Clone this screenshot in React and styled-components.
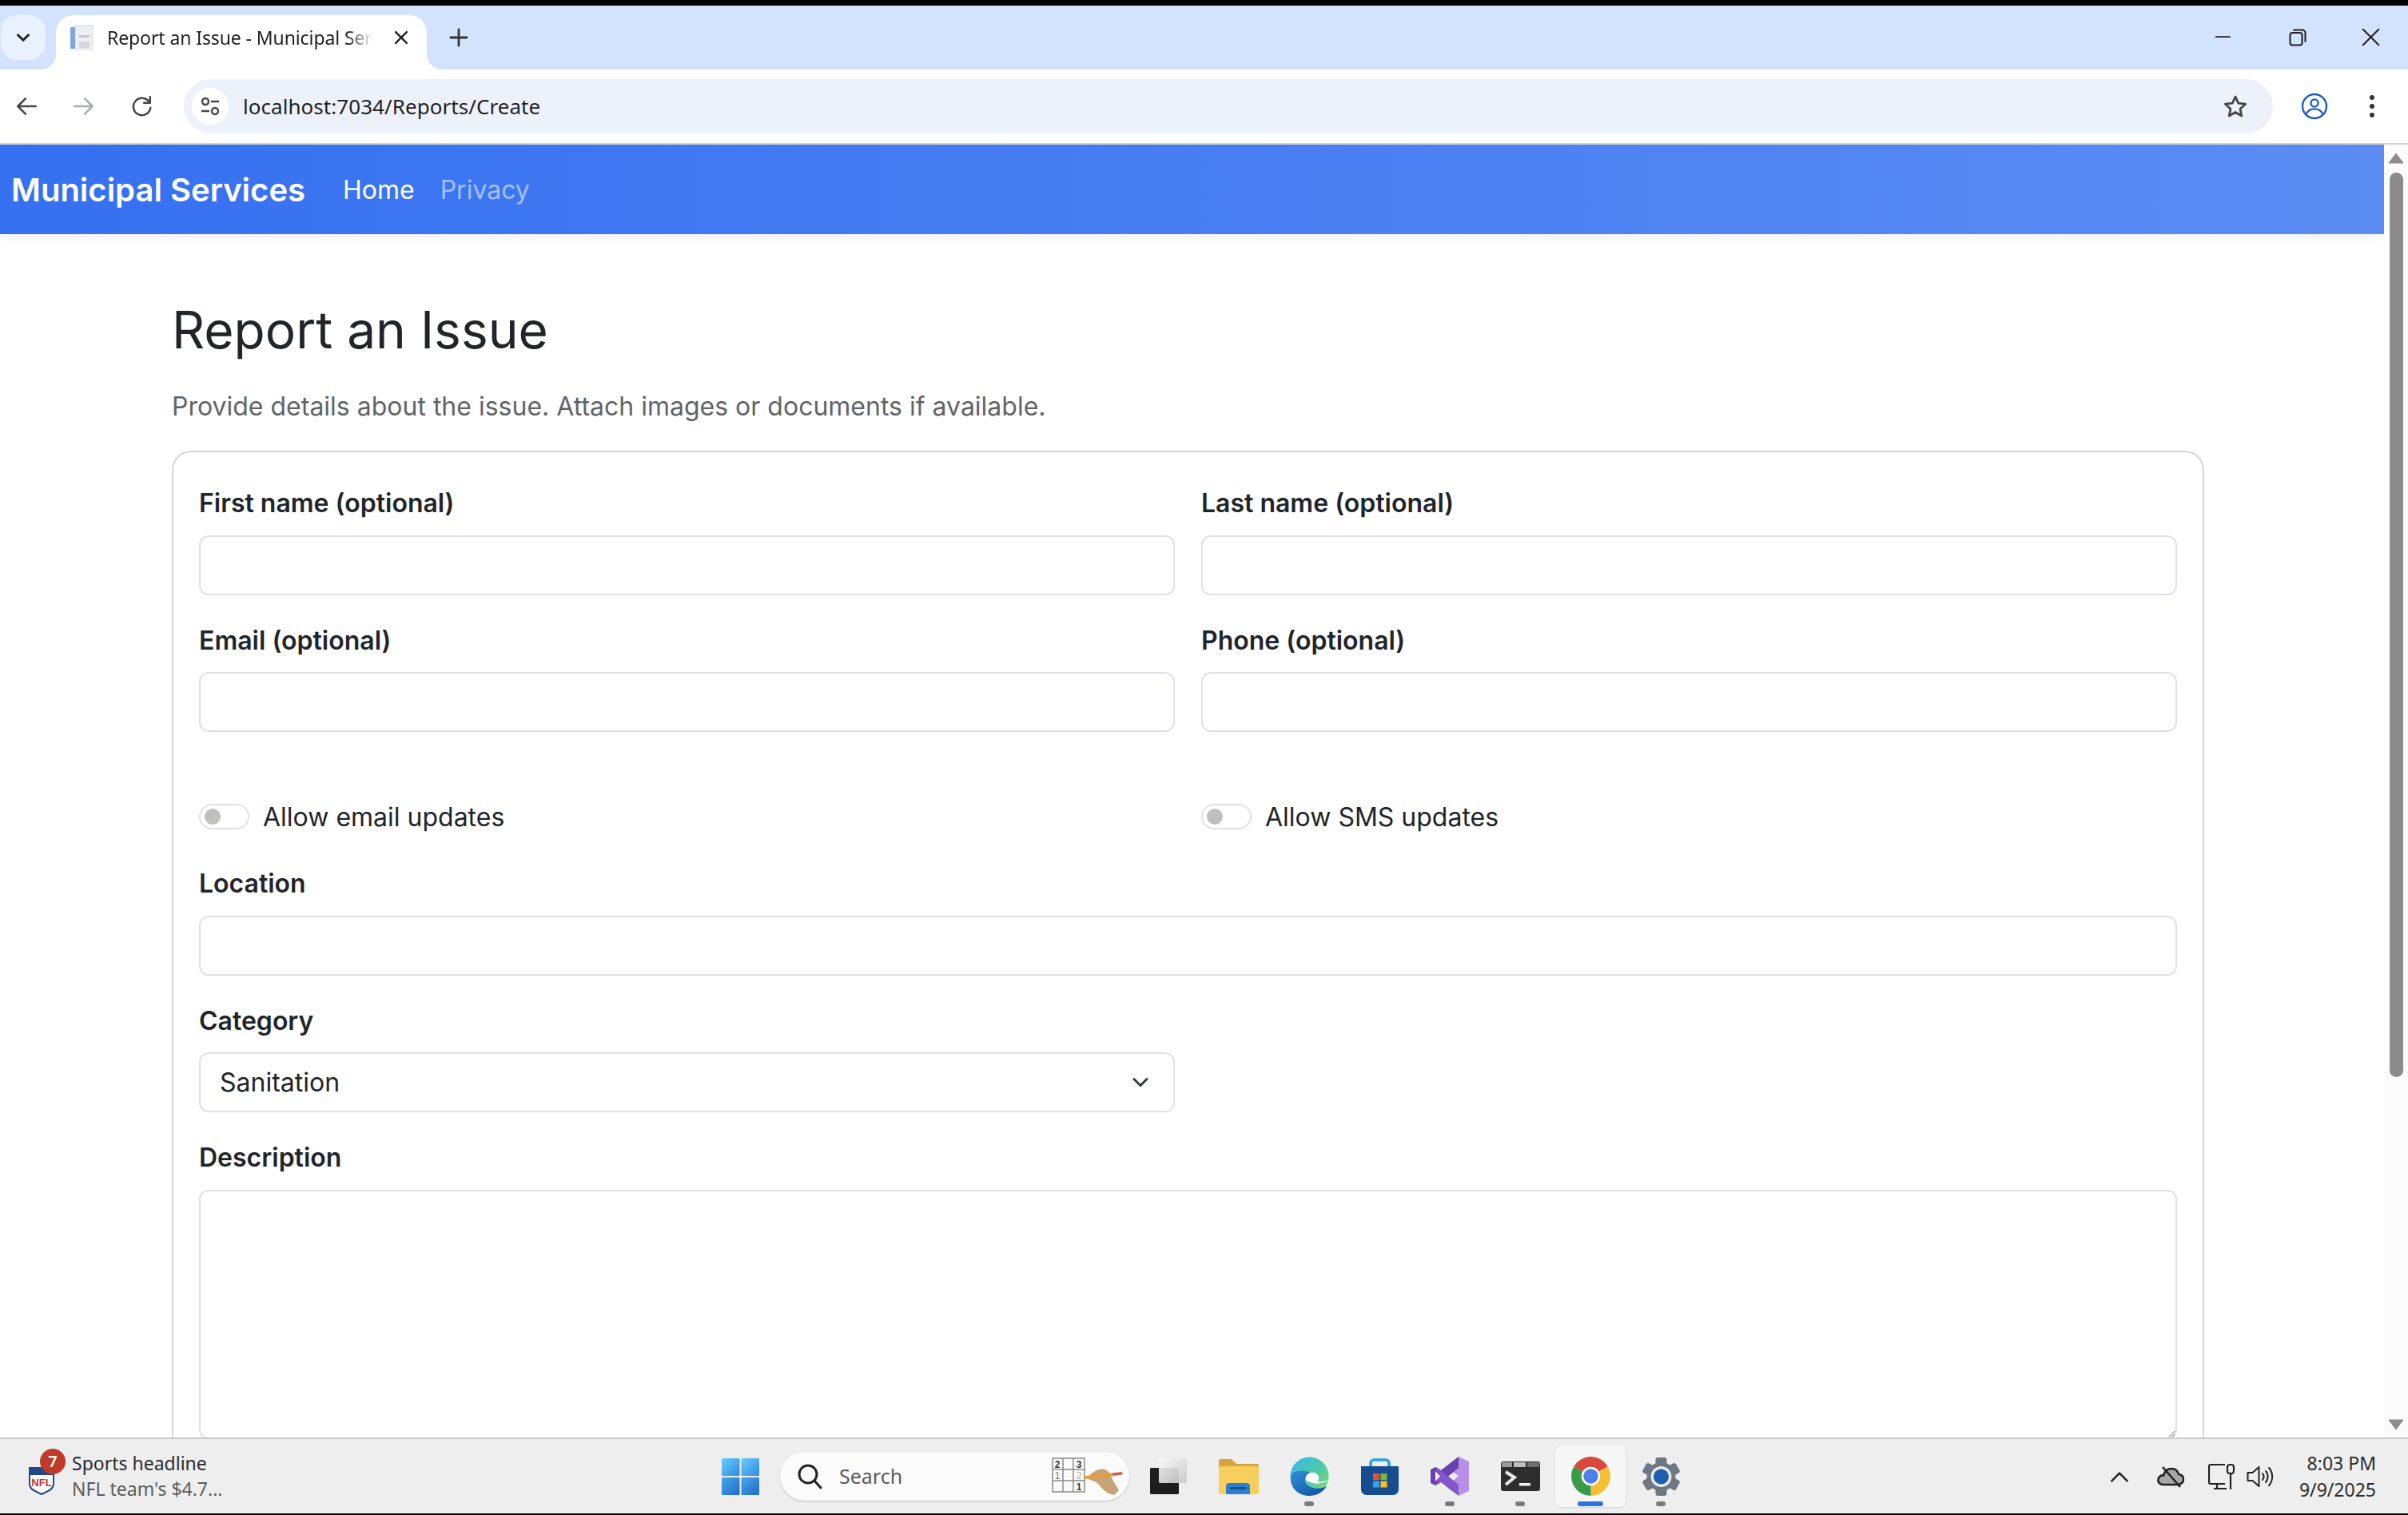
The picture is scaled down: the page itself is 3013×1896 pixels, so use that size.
import React from 'react'
import styled, { createGlobalStyle } from 'styled-components'

const GlobalStyle = createGlobalStyle`
    html, body {
        margin: 0;
        padding: 0;
        background: #fff;
    }
    * {
        box-sizing: border-box;
    }
`

const chevronSvg = encodeURIComponent(
    '<svg xmlns="http://www.w3.org/2000/svg" viewBox="0 0 20 14"><path d="M2 2.5l8 8 8-8" fill="none" stroke="#343a40" stroke-width="3" stroke-linecap="round" stroke-linejoin="round"/></svg>'
)

function Chevron({ size = 20 }) {
    return (
        <svg width={size} height={size} viewBox="0 0 20 20">
            <path d="M4 7l6 6 6-6" fill="none" stroke="#1f1f1f" strokeWidth="2.6" strokeLinecap="round" strokeLinejoin="round" />
        </svg>
    )
}

function Favicon() {
    return (
        <svg width="30" height="32" viewBox="0 0 30 32">
            <rect x="7" y="1" width="22" height="30" fill="#eceff3" stroke="#d5d9de" />
            <rect x="1" y="3" width="6" height="27" fill="#7fa8d8" />
            <rect x="12" y="13" width="13" height="3" fill="#c4c9cf" />
            <rect x="12" y="21" width="13" height="8" fill="#d3d7dc" />
        </svg>
    )
}

function IconPath({ size = 28, d, color = '#474747', width = 2.4 }) {
    return (
        <svg width={size} height={size} viewBox="0 0 28 28">
            <path d={d} fill="none" stroke={color} strokeWidth={width} strokeLinecap="round" strokeLinejoin="round" />
        </svg>
    )
}

function SiteInfoIcon() {
    return (
        <svg width="26" height="26" viewBox="0 0 26 26" fill="none" stroke="#474747" strokeWidth="2.4">
            <circle cx="7" cy="7" r="4" />
            <path d="M14 7h10M2 19h10" />
            <circle cx="19" cy="19" r="4" />
        </svg>
    )
}

function StarIcon() {
    return (
        <svg width="32" height="32" viewBox="0 0 32 32">
            <path d="M16 4l3.7 8.2 8.9 1-6.6 6 1.8 8.8L16 23.5 8.2 28l1.8-8.8-6.6-6 8.9-1z" fill="none" stroke="#474747" strokeWidth="2.8" strokeLinejoin="round" />
        </svg>
    )
}

function ProfileIcon() {
    return (
        <svg width="34" height="34" viewBox="0 0 34 34" fill="none" stroke="#1f5bc8" strokeWidth="2.4">
            <circle cx="17" cy="17" r="15" />
            <circle cx="17" cy="13" r="4.6" />
            <path d="M6.5 27c2-4.6 5.6-6.6 10.5-6.6s8.500 2 10.500 6.600" />
        </svg>
    )
}

function RestoreIcon() {
    return (
        <svg width="22" height="22" viewBox="0 0 22 22" fill="none" stroke="#1f1f1f" strokeWidth="2">
            <rect x="1.500" y="5" width="15" height="15.500" rx="3" />
            <path d="M6 1.500h10.500a4 4 0 0 1 4 4V16" strokeLinecap="round" />
        </svg>
    )
}

function ScrollArrow({ down }) {
    return (
        <svg width="20" height="14" viewBox="0 0 20 14">
            <path d={down ? 'M1 1h18l-9 12z' : 'M10 1l9 12H1z'} fill="#8c8c8c" stroke="#8c8c8c" strokeLinejoin="round" />
        </svg>
    )
}

function NflLogo() {
    return (
        <svg width="32" height="38" viewBox="0 0 32 38">
            <path d="M1 4h30v20c0 6-4 8-15 13C5 32 1 30 1 24z" fill="#fff" stroke="#1f4a8a" strokeWidth="2" />
            <rect x="2" y="5" width="28" height="8" fill="#1f4a8a" />
            <text x="16" y="27" textAnchor="middle" fontFamily="Liberation Sans, sans-serif" fontWeight="700" fontSize="13" fill="#c8332b">NFL</text>
        </svg>
    )
}

function WindowsLogo() {
    return (
        <svg width="47" height="46" viewBox="0 0 47 46">
            <defs>
                <linearGradient id="winA" x1="0" y1="0" x2="1" y2="1">
                    <stop offset="0" stopColor="#6bcdfa" />
                    <stop offset="1" stopColor="#2f8adf" />
                </linearGradient>
                <linearGradient id="winB" x1="0" y1="0" x2="1" y2="1">
                    <stop offset="0" stopColor="#4aa6ea" />
                    <stop offset="1" stopColor="#1f6cc9" />
                </linearGradient>
            </defs>
            <rect width="22.500" height="22" rx="1.500" fill="url(#winA)" />
            <rect x="24.500" width="22.500" height="22" fill="url(#winA)" rx="1.500" />
            <rect y="24" width="22.500" height="22" fill="url(#winB)" rx="1.500" />
            <rect x="24.500" y="24" width="22.500" height="22" fill="url(#winB)" rx="1.500" />
        </svg>
    )
}

function SearchIcon() {
    return (
        <svg width="32" height="34" viewBox="0 0 32 34" fill="none" stroke="#222" strokeWidth="3">
            <circle cx="14" cy="14" r="11" />
            <path d="M22 22l8 9" strokeLinecap="round" />
        </svg>
    )
}

function SudokuHand() {
    return (
        <svg width="90" height="50" viewBox="0 0 90 50">
            <g fill="none" stroke="#8a8a8a" strokeWidth="1.500">
                <rect x="1" y="2" width="40" height="42" />
                <path d="M14 2v42M27 2v42M1 16h40M1 30h40" />
            </g>
            <g fontFamily="Liberation Sans, sans-serif" fontSize="12" textAnchor="middle">
                <text x="7" y="14" fill="#333" fontWeight="700">2</text>
                <text x="34" y="14" fill="#333" fontWeight="700">3</text>
                <text x="7" y="28" fill="#777">1</text>
                <text x="34" y="28" fill="#aaa">2</text>
                <text x="34" y="42" fill="#333" fontWeight="700">1</text>
            </g>
            <path d="M44 27C50 20 58 14 66 16c8 2 8 10 12 16l6 10-6 6c-8-1-16-8-20-14-4-4-10-4-14-7z" fill="#c9a277" />
            <path d="M42 26l36-4" stroke="#e6a02e" strokeWidth="3.500" strokeLinecap="round" />
            <path d="M78 22l9-1" stroke="#c95c4a" strokeWidth="3.500" strokeLinecap="round" />
        </svg>
    )
}

function CopilotIcon() {
    return (
        <svg width="48" height="46" viewBox="0 0 48 46">
            <defs>
                <linearGradient id="copA" x1="0" y1="0" x2="1" y2="1">
                    <stop offset="0" stopColor="#fafafa" />
                    <stop offset="1" stopColor="#c8c8c8" />
                </linearGradient>
            </defs>
            <rect x="1" y="12" width="36" height="33" rx="1.500" fill="#1e1e1e" />
            <rect x="12" y="0" width="35" height="31" rx="1.500" fill="url(#copA)" opacity=".92" />
        </svg>
    )
}

function FolderIcon() {
    return (
        <svg width="52" height="44" viewBox="0 0 52 44">
            <path d="M1 3a3 3 0 0 1 3-3h13l6 6h26a2 2 0 0 1 2 2v6H1z" fill="#d9a33a" />
            <rect x="1" y="9" width="50" height="35" rx="2" fill="#f8cf5e" />
            <path d="M10 44V34a4 4 0 0 1 4-4h22a4 4 0 0 1 4 4v10z" fill="#2f7fd1" />
            <rect x="15" y="35" width="20" height="3" fill="#17548f" />
        </svg>
    )
}

function EdgeIcon() {
    return (
        <svg width="49" height="49" viewBox="0 0 49 49">
            <defs>
                <linearGradient id="edgeA" x1="0" y1="0" x2="1" y2="1">
                    <stop offset="0" stopColor="#37b7e8" />
                    <stop offset=".55" stopColor="#4fc9a8" />
                    <stop offset="1" stopColor="#88de6b" />
                </linearGradient>
                <linearGradient id="edgeB" x1="0" y1="0" x2="1" y2="1">
                    <stop offset="0" stopColor="#2f8fdc" />
                    <stop offset="1" stopColor="#0f4f9e" />
                </linearGradient>
            </defs>
            <circle cx="24.500" cy="24.500" r="24" fill="url(#edgeA)" />
            <path d="M1 26C0 40 12 49 24 49c9 0 17-4 22-12-6 3-14 4-20 1-6-2-9-8-6-13 2-3 5-4 8-4-7-4-26-6-27 5z" fill="url(#edgeB)" />
            <path d="M20 25c2-5 9-7 14-3 3 3 3 7 0 9 5 1 10 0 14-2-3 3-12 6-19 4-6-1-11-3-9-8z" fill="#fff" />
        </svg>
    )
}

function StoreIcon() {
    return (
        <svg width="47" height="47" viewBox="0 0 47 47">
            <path d="M12 13V7a4 4 0 0 1 4-4h15a4 4 0 0 1 4 4v6" fill="none" stroke="#29a3dc" strokeWidth="3.500" />
            <path d="M0 11h47v29a7 7 0 0 1-7 7H7a7 7 0 0 1-7-7z" fill="#164d8f" />
            <rect x="15" y="20" width="8" height="8" fill="#e8512f" />
            <rect x="24.500" y="20" width="8" height="8" fill="#7dbb2e" />
            <rect x="15" y="29.500" width="8" height="8" fill="#2aa6ee" />
            <rect x="24.500" y="29.500" width="8" height="8" fill="#fbbb20" />
        </svg>
    )
}

function VisualStudioIcon() {
    return (
        <svg width="49" height="49" viewBox="0 0 49 49">
            <path d="M35 0l13 6v37l-13 6-12-15 12-9.500-12-9.500z" fill="#b78fe8" />
            <path d="M35 0v14L13 32l-7 4-6-3V16l6-3 7 4z" fill="#6a3fb0" />
            <path d="M35 49V35L13 17l-7-4 6 11.500-6 11.500 7-4 10 8z" fill="#8457c8" />
            <path d="M6 18l6 6.500L6 31z" fill="#f2f2f2" />
        </svg>
    )
}

function TerminalIcon() {
    return (
        <svg width="49" height="37" viewBox="0 0 49 37">
            <rect width="49" height="37" rx="3" fill="#2d2d2d" />
            <rect x="1" y="1" width="13" height="6" fill="#9a9a9a" />
            <rect x="16" y="1" width="15" height="6" fill="#bdbdbd" />
            <rect x="33" y="1" width="15" height="6" fill="#6e6e6e" />
            <path d="M6 13l11 7-11 9" fill="none" stroke="#e8e8e8" strokeWidth="4" />
            <rect x="23" y="27" width="14" height="3.500" fill="#f2f2f2" />
        </svg>
    )
}

function ChromeIcon() {
    return (
        <svg width="49" height="49" viewBox="0 0 48 48">
            <path d="M24 24L3.200 12A24 24 0 0 1 44.800 12z" fill="#d9483b" />
            <path d="M24 24l20.800-12A24 24 0 0 1 24 48z" fill="#f4c033" />
            <path d="M24 24v24A24 24 0 0 1 3.200 12z" fill="#3a9a4c" />
            <circle cx="24" cy="24" r="11.500" fill="#fff" />
            <circle cx="24" cy="24" r="9" fill="#4a80e8" />
        </svg>
    )
}

function GearIcon() {
    return (
        <svg width="49" height="48" viewBox="0 0 48 48">
            <g fill="#6f7780">
                {[0, 60, 120, 180, 240, 300].map((deg) => (
                    <rect key={deg} x="17" y="0" width="14" height="12" rx="3" transform={`rotate(${deg} 24 24)`} />
                ))}
                <circle cx="24" cy="24" r="18" />
            </g>
            <circle cx="24" cy="24" r="13" fill="#e6e8ea" />
            <circle cx="24" cy="24" r="9.500" fill="#1f5db0" />
        </svg>
    )
}

function TrayCloud() {
    return (
        <svg width="34" height="28" viewBox="0 0 34 28" fill="none" stroke="#222" strokeWidth="2.600">
            <path d="M8 24C3 24 1 20.500 1.500 17.500 2 14 5 12 8 12.500 9.500 7 13 4 18 4c5 0 8 3 9 7 3.500.5 6 3 6 6.500S30 24 26 24z" fill="#a8a8a8" />
            <path d="M7 2l22 25" />
        </svg>
    )
}

function TrayNetwork() {
    return (
        <svg width="34" height="34" viewBox="0 0 34 34" fill="none" stroke="#222" strokeWidth="2.200">
            <path d="M21 2H3a2 2 0 0 0-2 2v20a2 2 0 0 0 2 2h18" />
            <path d="M11 26v5M7 32h16" />
            <rect x="24" y="2" width="8" height="11" rx="3" />
            <path d="M28 13v20" />
        </svg>
    )
}

function TraySpeaker() {
    return (
        <svg width="34" height="30" viewBox="0 0 34 30" fill="none" stroke="#222" strokeWidth="2">
            <path d="M1.500 10v10h6l8 7V3l-8 7z" strokeLinejoin="round" />
            <path d="M20 11c2 2.500 2 5.500 0 8M24 8c3.500 4 3.500 10 0 14M28 4c5.500 6 5.500 16 0 22" strokeLinecap="round" />
        </svg>
    )
}

const taskIcons = [
    { id: 'copilot', icon: <CopilotIcon /> },
    { id: 'folder', icon: <FolderIcon /> },
    { id: 'edge', icon: <EdgeIcon />, running: true },
    { id: 'store', icon: <StoreIcon /> },
    { id: 'vs', icon: <VisualStudioIcon />, running: true },
    { id: 'terminal', icon: <TerminalIcon />, running: true },
    { id: 'chrome', icon: <ChromeIcon />, active: true },
    { id: 'settings', icon: <GearIcon />, running: true },
]

export default function App() {
    return (
        <Screen>
            <GlobalStyle />
            <TopEdge />
            <TabStrip>
                <TabSearch><Chevron size={22} /></TabSearch>
                <Tab>
                    <Favicon />
                    <TabTitle>Report an Issue - Municipal Services</TabTitle>
                    <TabClose>
                        <IconPath size={24} d="M6 6l16 16M22 6L6 22" color="#1f1f1f" width={2.8} />
                    </TabClose>
                </Tab>
                <NewTab>
                    <IconPath size={28} d="M14 4v20M4 14h20" color="#333" width={2.800} />
                </NewTab>
                <WindowControls>
                    <WindowButton><IconPath size={24} d="M2 13h20" color="#1f1f1f" width={2.200} /></WindowButton>
                    <WindowButton><RestoreIcon /></WindowButton>
                    <WindowButton><IconPath size={26} d="M3 3l21 21M24 3L3 24" color="#1f1f1f" width={2.200} /></WindowButton>
                </WindowControls>
            </TabStrip>
            <Toolbar>
                <ToolButton><IconPath size={30} d="M25 14H5M13 5l-9 9 9 9" /></ToolButton>
                <ToolButton><IconPath size={30} d="M3 14h20M15 5l9 9-9 9" color="#a9acb0" /></ToolButton>
                <ToolButton><IconPath size={30} d="M23 9a10 10 0 1 0 1.500 7M24 3v7h-7" /></ToolButton>
                <Omnibox>
                    <SiteInfo><SiteInfoIcon /></SiteInfo>
                    <UrlText>localhost:7034/Reports/Create</UrlText>
                    <ToolButton><StarIcon /></ToolButton>
                </Omnibox>
                <ToolButton><ProfileIcon /></ToolButton>
                <ToolButton>
                    <Dots><i /><i /><i /></Dots>
                </ToolButton>
            </Toolbar>
            <Viewport>
                <Page>
                    <NavBar>
                        <Brand>Municipal Services</Brand>
                        <NavLink $active>Home</NavLink>
                        <NavLink>Privacy</NavLink>
                    </NavBar>
                    <Content>
                        <Title>Report an Issue</Title>
                        <Lead>Provide details about the issue. Attach images or documents if available.</Lead>
                        <Card>
                            <FormGrid>
                                <Field>
                                    <Label>First name (optional)</Label>
                                    <TextInput readOnly />
                                </Field>
                                <Field>
                                    <Label>Last name (optional)</Label>
                                    <TextInput readOnly />
                                </Field>
                                <Field>
                                    <Label>Email (optional)</Label>
                                    <TextInput readOnly />
                                </Field>
                                <Field>
                                    <Label>Phone (optional)</Label>
                                    <TextInput readOnly />
                                </Field>
                                <SwitchRow>
                                    <Switch />
                                    <SwitchLabel>Allow email updates</SwitchLabel>
                                </SwitchRow>
                                <SwitchRow>
                                    <Switch />
                                    <SwitchLabel>Allow SMS updates</SwitchLabel>
                                </SwitchRow>
                                <Field $wide>
                                    <Label>Location</Label>
                                    <TextInput readOnly />
                                </Field>
                                <Field>
                                    <Label>Category</Label>
                                    <SelectBox defaultValue="Sanitation">
                                        <option>Sanitation</option>
                                    </SelectBox>
                                </Field>
                                <Field $wide>
                                    <Label>Description</Label>
                                    <TextArea readOnly />
                                </Field>
                            </FormGrid>
                        </Card>
                    </Content>
                </Page>
                <ScrollBar>
                    <ScrollArrow />
                    <ScrollThumb />
                    <ScrollBottom><ScrollArrow down /></ScrollBottom>
                </ScrollBar>
            </Viewport>
            <TaskBar>
                <NewsWidget>
                    <NewsLogo>
                        <NflLogo />
                        <NewsBadge>7</NewsBadge>
                    </NewsLogo>
                    <NewsText>
                        <NewsTitle>Sports headline</NewsTitle>
                        <NewsSub>NFL team's $4.7...</NewsSub>
                    </NewsText>
                </NewsWidget>
                <WindowsLogo />
                <SearchPill>
                    <SearchIcon />
                    <SearchText>Search</SearchText>
                    <SudokuHand />
                </SearchPill>
                <TaskIcons>
                    {taskIcons.map((item) => (
                        <TaskSlot key={item.id} $active={item.active}>
                            {item.icon}
                            {item.active && <ActiveBar />}
                            {item.running && <RunningDot />}
                        </TaskSlot>
                    ))}
                </TaskIcons>
                <Tray>
                    <TrayItem $gap={32}>
                        <IconPath size={30} d="M5 19l9-9 9 9" color="#222" width={2.400} />
                    </TrayItem>
                    <TrayItem $gap={30}><TrayCloud /></TrayItem>
                    <TrayItem $gap={14}><TrayNetwork /></TrayItem>
                    <TrayItem $gap={32}><TraySpeaker /></TrayItem>
                    <Clock>
                        <span>8:03 PM</span>
                        <span>9/9/2025</span>
                    </Clock>
                </Tray>
            </TaskBar>
            <BottomEdge />
        </Screen>
    )
}

const Screen = styled.div`
    width: 3013px;
    height: 1896px;
    display: flex;
    flex-direction: column;
    overflow: hidden;
    font-family: Inter, "Liberation Sans", sans-serif;
    background: #fff;
    color: #212529;
`

const TopEdge = styled.div`
    height: 7px;
    background: #000;
    flex: none;
`

const TabStrip = styled.div`
    height: 80px;
    flex: none;
    background: #d3e3fd;
    display: flex;
    align-items: flex-start;
    padding-top: 12px;
`

const TabSearch = styled.div`
    width: 56px;
    height: 56px;
    margin-left: 1px;
    border-radius: 20px;
    background: #eaf1fe;
    display: flex;
    align-items: center;
    justify-content: center;
`

const Tab = styled.div`
    position: relative;
    width: 464px;
    height: 68px;
    margin-left: 13px;
    padding: 0 20px 12px 17px;
    background: #fff;
    border-radius: 22px 22px 0 0;
    display: flex;
    align-items: center;
    &::before, &::after {
        content: '';
        position: absolute;
        bottom: 0;
        width: 20px;
        height: 20px;
    }
    &::before {
        left: -20px;
        background: radial-gradient(circle at 0 0, #d3e3fd 20px, #fff 20.500px);
    }
    &::after {
        right: -20px;
        background: radial-gradient(circle at 100% 0, #d3e3fd 20px, #fff 20.500px);
    }
`

const TabTitle = styled.div`
    width: 333px;
    margin-left: 17px;
    font-family: "Noto Sans", sans-serif;
    font-size: 23px;
    letter-spacing: -.1px;
    color: #1f1f1f;
    white-space: nowrap;
    overflow: hidden;
    -webkit-mask-image: linear-gradient(to right, #000 90%, transparent);
    mask-image: linear-gradient(to right, #000 90%, transparent);
`

const TabClose = styled.div`
    margin-left: auto;
    display: flex;
`

const NewTab = styled.div`
    margin-left: 26px;
    height: 56px;
    display: flex;
    align-items: center;
`

const WindowControls = styled.div`
    margin-left: auto;
    margin-top: -12px;
    display: flex;
`

const WindowButton = styled.div`
    width: 92px;
    height: 80px;
    display: flex;
    align-items: center;
    justify-content: center;
`

const Toolbar = styled.div`
    height: 94px;
    flex: none;
    background: #fff;
    border-bottom: 2px solid #d4d4d4;
    display: flex;
    align-items: center;
    gap: 28px;
    padding: 0 23px 1px 11px;
`

const ToolButton = styled.div`
    width: 44px;
    height: 44px;
    flex: none;
    display: flex;
    align-items: center;
    justify-content: center;
`

const Omnibox = styled.div`
    flex: 1;
    height: 68px;
    margin: 0 2px 0 3px;
    padding: 0 25px 0 10px;
    border-radius: 34px;
    background: #edf2fa;
    display: flex;
    align-items: center;
`

const SiteInfo = styled.div`
    width: 46px;
    height: 46px;
    border-radius: 50%;
    background: #fff;
    display: flex;
    align-items: center;
    justify-content: center;
`

const UrlText = styled.div`
    flex: 1;
    margin-left: 18px;
    font-family: "Noto Sans", sans-serif;
    font-size: 26px;
    letter-spacing: .05px;
    color: #1f1f1f;
`

const Dots = styled.div`
    display: flex;
    flex-direction: column;
    gap: 5px;
    i {
        width: 6px;
        height: 6px;
        border-radius: 50%;
        background: #333;
    }
`

const Viewport = styled.div`
    flex: 1;
    min-height: 0;
    display: flex;
    background: #fff;
`

const Page = styled.div`
    flex: 1;
    min-width: 0;
    overflow: hidden;
`

const NavBar = styled.nav`
    height: 112px;
    padding: 0 0 0 14px;
    display: flex;
    align-items: center;
    background: linear-gradient(90deg, #3570f0, #5a8cf3);
    box-shadow: 0 3px 14px rgba(0, 0, 0, .08);
`

const Brand = styled.div`
    width: 415px;
    font-size: 40px;
    font-weight: 600;
    color: #fff;
    white-space: nowrap;
`

const NavLink = styled.div`
    margin-right: 32px;
    font-size: 32px;
    color: ${(props) => (props.$active ? '#fff' : 'rgba(255, 255, 255, .55)')};
`

const Content = styled.main`
    padding: 82px 225px 0 215px;
`

const Title = styled.h1`
    margin: 0;
    font-size: 64px;
    font-weight: 400;
    line-height: 76px;
    color: #212529;
`

const Lead = styled.p`
    margin: 35px 0 0;
    font-size: 32px;
    line-height: 46px;
    color: #5f6468;
`

const Card = styled.section`
    margin-top: 32px;
    height: 1400px;
    padding: 41px 32px 0;
    border: 2px solid #d4d6d9;
    border-radius: 24px;
`

const FormGrid = styled.div`
    display: grid;
    grid-template-columns: 1fr 1fr;
    column-gap: 33px;
`

const Field = styled.div`
    grid-column: ${(props) => (props.$wide ? '1 / -1' : 'auto')};
    margin-bottom: 34px;
`

const Label = styled.label`
    display: block;
    height: 46px;
    margin-bottom: 16.500px;
    font-size: 32px;
    font-weight: 600;
    line-height: 46px;
    color: #212529;
`

const TextInput = styled.input`
    display: block;
    width: 100%;
    height: 75px;
    border: 2px solid #dee2e6;
    border-radius: 12px;
    background: #fff;
    outline: none;
`

const SelectBox = styled.select`
    display: block;
    width: 100%;
    height: 75px;
    padding: 0 24px;
    border: 2px solid #dee2e6;
    border-radius: 12px;
    font-family: inherit;
    font-size: 32px;
    color: #212529;
    appearance: none;
    background: #fff url("data:image/svg+xml,${chevronSvg}") no-repeat right 31px center / 20px 14px;
`

const TextArea = styled.textarea`
    display: block;
    width: 100%;
    height: 312px;
    border: 2px solid #dee2e6;
    border-radius: 12px;
    background: #fff;
    outline: none;
`

const SwitchRow = styled.div`
    height: 46px;
    margin: 49px 0 38px;
    display: flex;
    align-items: center;
    gap: 17px;
`

const Switch = styled.div`
    width: 63px;
    height: 32px;
    padding: 4px 5px;
    border: 2px solid #dee2e6;
    border-radius: 16px;
    background: #fff;
    &::before {
        content: '';
        display: block;
        width: 20px;
        height: 20px;
        border-radius: 50%;
        background: #bfbfbf;
    }
`

const SwitchLabel = styled.span`
    font-size: 32px;
    color: #212529;
`

const ScrollBar = styled.div`
    width: 30px;
    flex: none;
    padding: 10px 0 9px;
    display: flex;
    flex-direction: column;
    align-items: center;
    background: #fbfbfb;
`

const ScrollThumb = styled.div`
    width: 17px;
    height: 1132px;
    margin-top: 11px;
    border-radius: 9px;
    background: #8c8c8c;
`

const ScrollBottom = styled.div`
    margin-top: auto;
    display: flex;
`

const TaskBar = styled.footer`
    height: 95px;
    flex: none;
    background: #eeeeee;
    border-top: 2px solid #c9c9c9;
    display: flex;
    align-items: center;
    font-family: "Noto Sans", sans-serif;
`

const NewsWidget = styled.div`
    width: 903px;
    flex: none;
    padding-left: 36px;
    display: flex;
    align-items: center;
    gap: 22px;
`

const NewsLogo = styled.div`
    position: relative;
    width: 32px;
    height: 38px;
    margin-top: 8px;
`

const NewsBadge = styled.div`
    position: absolute;
    top: -20px;
    left: 14px;
    width: 32px;
    height: 32px;
    border-radius: 50%;
    background: #bf3a28;
    color: #fff;
    font-size: 20px;
    font-weight: 600;
    text-align: center;
    line-height: 32px;
`

const NewsText = styled.div`
    display: flex;
    flex-direction: column;
    margin-top: -2px;
    gap: 2px;
    font-size: 23px;
    line-height: 30px;
`

const NewsTitle = styled.div`
    color: #2a2a2a;
`

const NewsSub = styled.div`
    color: #5c5c5c;
`

const SearchPill = styled.div`
    width: 437px;
    height: 61px;
    margin-left: 26px;
    padding: 0 7px 0 21px;
    border-radius: 31px;
    background: #fbfbfb;
    box-shadow: 0 1px 2px rgba(0, 0, 0, .2);
    display: flex;
    align-items: center;
`

const SearchText = styled.span`
    flex: 1;
    margin-left: 21px;
    margin-bottom: 2px;
    font-size: 25px;
    color: #5c5c5c;
`

const TaskIcons = styled.div`
    margin-left: 5px;
    display: flex;
    align-items: center;
`

const TaskSlot = styled.div`
    position: relative;
    width: 88px;
    height: 77px;
    display: flex;
    align-items: center;
    justify-content: center;
    border-radius: 8px;
    background: ${(props) => (props.$active ? '#f7f7f7' : 'transparent')};
    box-shadow: ${(props) => (props.$active ? '0 1px 2px rgba(0, 0, 0, .12)' : 'none')};
`

const RunningDot = styled.div`
    position: absolute;
    bottom: 1px;
    left: 38px;
    width: 12px;
    height: 6px;
    border-radius: 3px;
    background: #7b7b7b;
`

const ActiveBar = styled.div`
    position: absolute;
    bottom: 1px;
    left: 28px;
    width: 32px;
    height: 6px;
    border-radius: 3px;
    background: #2f74d8;
`

const Tray = styled.div`
    margin-left: auto;
    padding-right: 40px;
    display: flex;
    align-items: center;
`

const TrayItem = styled.div`
    display: flex;
    margin-right: ${(props) => props.$gap}px;
`

const Clock = styled.div`
    display: flex;
    flex-direction: column;
    align-items: flex-end;
    gap: 3px;
    font-size: 23px;
    line-height: 30px;
    color: #2a2a2a;
`

const BottomEdge = styled.div`
    height: 2px;
    flex: none;
    background: #000;
`
